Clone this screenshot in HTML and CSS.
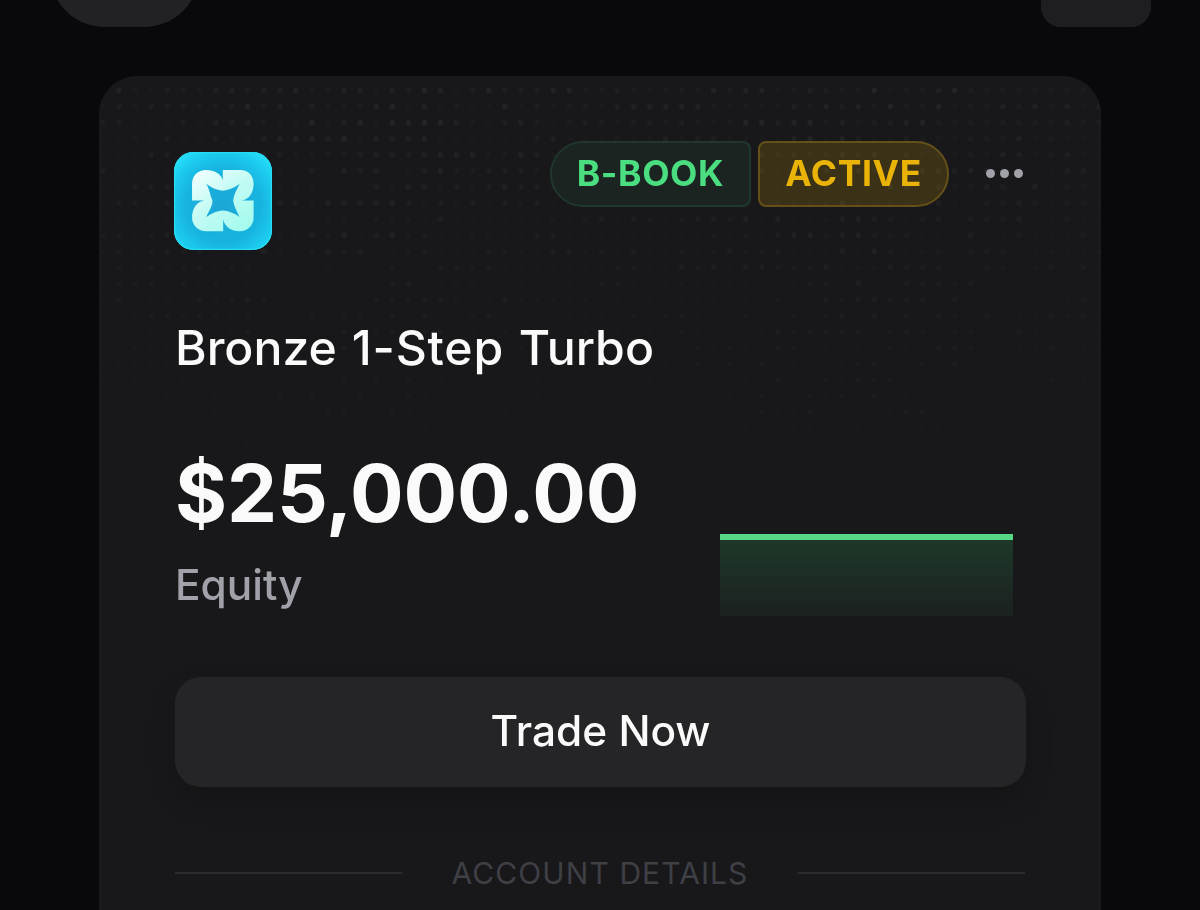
FILE: index.html
```html
<!DOCTYPE html>
<html lang="en">
<head>
    <meta charset="utf-8">
    <title>Accounts</title>
    <link rel="stylesheet" href="styles.css">
</head>
<body>

<div class="topbar">
    <div class="pill"></div>
    <div class="square"></div>
</div>

<div class="card">
    <canvas class="dots" id="dots" width="1000" height="480"></canvas>

    <div class="header">
        <svg class="logo" viewBox="44 37 293 293">
            <defs>
                <radialGradient id="tile" cx="0.5" cy="0.55" r="0.7">
                    <stop offset="0" stop-color="#1ca6d6"/>
                    <stop offset="0.55" stop-color="#17b4e0"/>
                    <stop offset="0.8" stop-color="#1dcdf0"/>
                    <stop offset="1" stop-color="#2ae6fa"/>
                </radialGradient>
                <linearGradient id="mark" x1="0" y1="0" x2="0.8" y2="1">
                    <stop offset="0" stop-color="#f6ffff"/>
                    <stop offset="0.5" stop-color="#c4fbf4"/>
                    <stop offset="1" stop-color="#a4fbee"/>
                </linearGradient>
            </defs>
            <rect x="44" y="37" width="293" height="293" rx="58" fill="url(#tile)"/>
            <rect x="46" y="39" width="289" height="289" rx="56" fill="none" stroke="#24dcf4" stroke-width="4"/>
            <path fill="url(#mark)" fill-rule="evenodd" d="M98 182V132C98 108 116 91 140 91C164 91 186 103 190 122V91H243C266 91 282 108 282 132C282 158 270 178 247 182H282V233C282 257 264 274 240 274C216 274 196 262 191 239V274H141C116 274 98 257 98 233C98 206 112 185 135 182ZM140 132C150 146 152 168 159 182C160 198 146 217 141 231C158 219 176 213 190 212C206 213 224 220 240 231C232 214 222 198 221 182C222 166 232 150 240 133C222 145 206 152 190 153C174 152 156 144 140 132Z"/>
        </svg>
        <div class="actions">
            <div class="badge book">B-BOOK</div>
            <div class="badge active">ACTIVE</div>
            <div class="menu"><i></i><i></i><i></i></div>
        </div>
    </div>

    <div class="title">Bronze <span>1-Step</span> Turbo</div>

    <div class="stats">
        <div>
            <div class="amount">$25,000.00</div>
            <div class="label">Equity</div>
        </div>
        <div class="chart"></div>
    </div>

    <button class="trade">Trade Now</button>

    <div class="divider"><span>ACCOUNT DETAILS</span></div>
</div>

<script src="dots.js"></script>
</body>
</html>
```
FILE: styles.css
```css
body {
    display: flow-root;
    margin: 0;
    height: 910px;
    overflow: hidden;
    background: #09090b;
    color: #fafafa;
    font-family: Inter, sans-serif;
}
.topbar {
    display: flex;
    justify-content: space-between;
    align-items: flex-end;
    height: 109px;
    margin: -82px 49px 49px 50px;
}
.pill {
    width: 149px;
    height: 109px;
    border-radius: 55px;
    background: #222224;
}
.square {
    width: 110px;
    height: 109px;
    border-radius: 20px;
    background: #1e1e20;
}
.card {
    position: relative;
    box-sizing: border-box;
    width: 1002px;
    height: 834px;
    margin: 0 99px;
    padding: 64px 75px 0;
    border: 1px solid #1b1b1d;
    border-bottom: 0;
    border-radius: 38px 38px 0 0;
    background: #18181a;
    overflow: hidden;
}
.dots {
    position: absolute;
    top: 0;
    left: 0;
}
.header,
.title,
.stats,
.trade,
.divider {
    position: relative;
}
.header {
    display: flex;
    justify-content: space-between;
    height: 109px;
}
.logo {
    width: 98px;
    height: 98px;
    margin: 11px 0 0 -1px;
}
.actions {
    display: flex;
    height: 65px;
}
.badge {
    box-sizing: border-box;
    height: 66px;
    border: 2px solid;
    font-size: 35.5px;
    font-weight: 700;
    line-height: 62px;
    letter-spacing: 0.6px;
    text-align: center;
}
.book {
    width: 201px;
    margin-right: 7px;
    border-color: #20372d;
    border-radius: 33px 8px 8px 33px;
    background: #1c2422;
    color: #4ade80;
}
.active {
    width: 191px;
    border-color: #65501a;
    border-radius: 8px 33px 33px 8px;
    background: rgba(234, 179, 8, 0.16);
    color: #eab308;
}
.menu {
    display: flex;
    align-items: center;
    gap: 5px;
    margin: 0 2px 0 37px;
}
.menu i {
    width: 9px;
    height: 9px;
    border-radius: 50%;
    background: #a1a1aa;
}
.title {
    margin-top: 68px;
    font-size: 48.2px;
    font-weight: 500;
    line-height: 60px;
    word-spacing: 2px;
}
.title span {
    letter-spacing: 0.8px;
}
.stats {
    display: flex;
    justify-content: space-between;
    height: 299px;
}
.amount {
    margin-top: 65px;
    font-size: 79.6px;
    font-weight: 700;
    line-height: 100px;
    letter-spacing: -0.15px;
}
.label {
    margin-top: 15px;
    color: #a1a1aa;
    font-size: 42.4px;
    font-weight: 450;
    line-height: 54px;
}
.chart {
    box-sizing: border-box;
    width: 293px;
    height: 82px;
    margin: 156px 12px 0 0;
    border-top: 6px solid #56d884;
    background: linear-gradient(#1e3829, #1b2120);
}
.trade {
    display: block;
    width: 851px;
    height: 110px;
    padding: 0 0 3px;
    border: 0;
    border-radius: 26px;
    background: #252527;
    box-shadow: 0 14px 30px -4px rgba(0, 0, 0, 0.22);
    color: #fafafa;
    font-family: Inter, sans-serif;
    font-size: 42.4px;
    font-weight: 500;
}
.divider {
    display: flex;
    align-items: center;
    gap: 50px;
    margin-top: 67px;
    color: #3f3f46;
    font-size: 30px;
    line-height: 38px;
    letter-spacing: 1.08px;
}
.divider:before,
.divider:after {
    content: "";
    flex: 1;
    height: 2px;
    background: #2b2b2d;
}
```
FILE: dots.js
```js
var canvas = document.getElementById('dots');
var ctx = canvas.getContext('2d');
var seed = 7;

function random() {
    seed = (seed * 16807) % 2147483647;
    return seed / 2147483647;
}

// dots get fainter towards the bottom of the card
for (var row = 0; row < 28; row++) {
    for (var col = 0; col < 63; col++) {
        var fade = Math.pow(1 - row / 28, 1.1);
        var wave = 0.75 + 0.25 * Math.sin(col / 5 - 1.5);
        var alpha = (0.016 + 0.05 * Math.pow(random(), 2) * wave) * fade;
        ctx.fillStyle = 'rgba(255, 255, 255, ' + alpha + ')';
        ctx.beginPath();
        ctx.arc(3 + col * 16.07, 13.5 + row * 16.07, 2.8, 0, Math.PI * 2);
        ctx.fill();
    }
}
```
